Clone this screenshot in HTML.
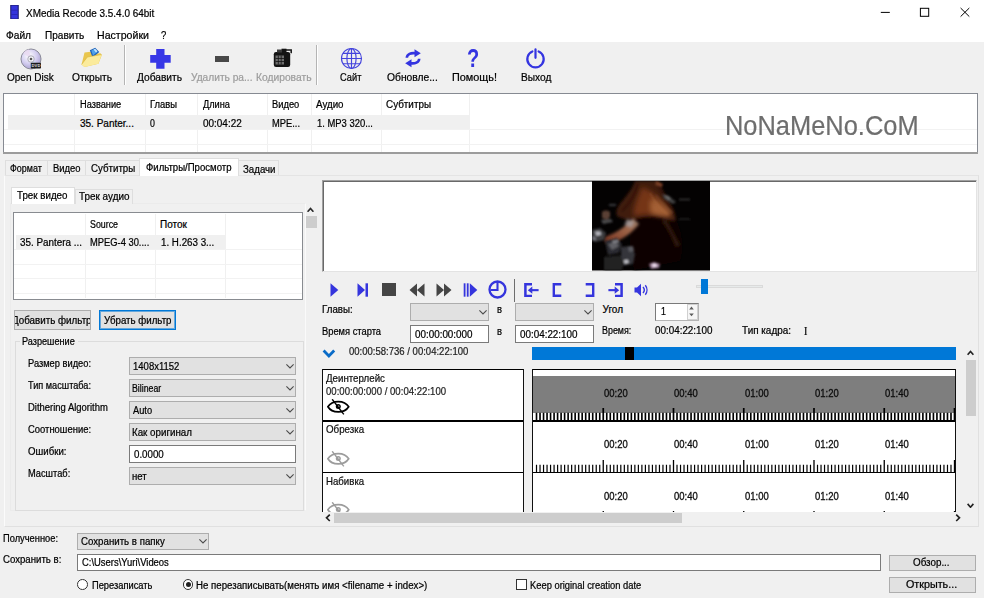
<!DOCTYPE html>
<html><head><meta charset="utf-8">
<style>
*{box-sizing:border-box;margin:0;padding:0}
html,body{width:984px;height:598px;overflow:hidden;background:#f0f0f0}
body{position:relative;font-family:"Liberation Sans",sans-serif;font-size:11px;color:#000}
.a{position:absolute}
.t{position:absolute;white-space:nowrap;color:#000;transform-origin:0 50%;-webkit-text-stroke:0.220px currentColor}
.cb{position:absolute;background:#e1e1e1;border:1px solid #adadad}
.ed{position:absolute;background:#fff;border:1px solid #7a7a7a}
.btn{position:absolute;background:#e1e1e1;border:1px solid #adadad}
.tab{position:absolute;background:#f0f0f0;border:1px solid #dedede;border-bottom:none}
</style></head><body>
<div class="a" style="left:0;top:0;width:984px;height:41.5px;background:#fff"></div>
<svg class="a" style="left:9.500px;top:4.700px" width="9" height="14.200" viewBox="0 0 9 14.200"><rect x="0.200" y="0" width="8.600" height="14.200" fill="#1d1d72"/><rect x="1.300" y="0.600" width="6.400" height="13" fill="#3434dc"/><rect x="1.300" y="4.800" width="6.400" height="0.700" fill="#2424a8"/><rect x="1.300" y="9.300" width="6.400" height="0.700" fill="#2424a8"/></svg>
<svg class="a" style="left:880px;top:7px" width="100" height="12" viewBox="0 0 100 12" fill="none" stroke="#000" stroke-width="1"><path d="M0.800 5.400h9"/><rect x="40.400" y="1.300" width="8.300" height="8"/><path d="M80.600 1l8.700 8.600M89.300 1l-8.700 8.600"/></svg>
<div class="t" style="left:25.50px;top:5.50px;font-size:10.8px;line-height:14px;height:14px;transform:scaleX(0.921);">XMedia Recode 3.5.4.0 64bit</div><div class="t" style="left:6.00px;top:27.60px;font-size:10.8px;line-height:14px;height:14px;transform:scaleX(0.942);">Файл</div><div class="t" style="left:44.50px;top:27.60px;font-size:10.8px;line-height:14px;height:14px;transform:scaleX(0.932);">Править</div><div class="t" style="left:97.00px;top:27.60px;font-size:10.8px;line-height:14px;height:14px;transform:scaleX(0.982);">Настройки</div><div class="t" style="left:161.00px;top:27.60px;font-size:10.8px;line-height:14px;height:14px;transform:scaleX(0.880);">?</div><div class="a" style="left:124px;top:45px;width:1px;height:40px;background:#b4b4b4"></div><div class="a" style="left:125px;top:45px;width:1px;height:40px;background:#fff"></div><div class="a" style="left:316px;top:45px;width:1px;height:40px;background:#b4b4b4"></div><div class="a" style="left:317px;top:45px;width:1px;height:40px;background:#fff"></div><svg class="a" style="left:20px;top:48px" width="22" height="22" viewBox="0 0 22 22">
<defs><radialGradient id="cdg" cx="0.4" cy="0.35" r="0.7"><stop offset="0" stop-color="#ffffff"/><stop offset="0.550" stop-color="#d4cef0"/><stop offset="1" stop-color="#a49ccc"/></radialGradient></defs>
<circle cx="11" cy="11" r="10" fill="url(#cdg)" stroke="#8a8a98" stroke-width="1"/>
<path d="M11 11L3 5A10 10 0 0 1 9 1.200z" fill="#e8d8f0" opacity="0.8"/><path d="M11 11L19 17A10 10 0 0 1 13 20.800z" fill="#c8d8f0" opacity="0.8"/>
<circle cx="11" cy="11" r="3.200" fill="#f4f4f8" stroke="#9a9aa8" stroke-width="0.800"/><circle cx="11" cy="11" r="1.300" fill="#555"/>
<rect x="10.800" y="14.700" width="10.200" height="5.800" rx="0.800" fill="#1c1c1c"/><text x="16" y="19.200" font-family="Liberation Sans" font-size="4.200" font-weight="bold" fill="#ddd" text-anchor="middle">DVD</text>
</svg><svg class="a" style="left:80px;top:46px" width="23" height="23" viewBox="0 0 23 23">
<path d="M4.500 6.500L10.500 5.800L12.300 8L20.500 7.200L21.700 9.200L18.400 17.800L4.500 21L1.600 18.400z" fill="#e9c64e"/>
<path d="M9.800 4.200L15.200 1.800L19.300 5.900L12.600 11.400z" fill="#1f62b8"/><path d="M11.300 4.600L14.900 3L17.600 5.800L13 9.400z" fill="#4da0ea"/><path d="M13.500 3.600l1.700 -0.800l2.300 2.400l-1.500 1.200z" fill="#bfe4ff"/>
<path d="M1.600 18.400L7.400 11L21.700 8.600L18.400 17.800L4.500 21z" fill="#fbeb9c"/><path d="M1.600 18.400L7.400 11L21.700 8.600" fill="none" stroke="#d9b63c" stroke-width="0.600"/>
</svg><svg class="a" style="left:150px;top:48.500px" width="21" height="20" viewBox="0 0 21 20"><path d="M6.200 0h8.300v6h6.200v7.800h-6.200v6h-8.300v-6h-6v-7.800h6z" fill="#3737e6"/></svg><div class="a" style="left:214.5px;top:55.5px;width:14.500px;height:6px;background:#484848"></div><svg class="a" style="left:273px;top:48px" width="20" height="20" viewBox="0 0 20 20">
<rect x="0.800" y="4" width="16.400" height="15" rx="2.200" fill="#141414"/><rect x="8.500" y="0.700" width="5" height="4" fill="#141414"/><path d="M13 2h5.200v3.200" fill="none" stroke="#141414" stroke-width="1.500"/><rect x="4" y="1.500" width="5" height="3" fill="#3a3a3a"/>
<rect x="2.500" y="7.500" width="8.500" height="9" fill="#6e6e6e"/><path d="M2.500 10.500h8.500M2.500 13.500h8.500M5.300 7.500v9M8.200 7.500v9" stroke="#141414" stroke-width="0.800"/>
</svg><svg class="a" style="left:340px;top:47px" width="23" height="23" viewBox="0 0 23 23" fill="none" stroke="#4444dc" stroke-width="1.150">
<circle cx="11.500" cy="11.500" r="10"/><ellipse cx="11.500" cy="11.500" rx="4.600" ry="10"/><path d="M11.500 1.500v20M1.500 11.500h20M3 6.300h17M3 16.700h17"/></svg><svg class="a" style="left:404.500px;top:49px" width="16" height="18.500" viewBox="0 0 16 18.500" fill="none" stroke="#3434e0" stroke-width="2.600">
<path d="M1.800 8.800C2 5 6 3.600 10.500 4.300"/><path d="M14.200 9.700C14 13.500 10 14.900 5.500 14.200"/>
<path d="M9.500 0.300L15.800 4.300L9.500 8.300z" fill="#3434e0" stroke="none"/><path d="M6.500 10.200L0.200 14.200L6.500 18.200z" fill="#3434e0" stroke="none"/></svg><div class="a" style="left:465.400px;top:44.500px;width:16px;height:26px;font-size:25px;line-height:26px;font-weight:bold;color:#3434e0;text-align:center;transform:scaleX(0.800)">?</div><svg class="a" style="left:525.200px;top:48px" width="21" height="21" viewBox="0 0 21 21" fill="none" stroke="#3434e0" stroke-width="2.200" stroke-linecap="round">
<path d="M7.400 3.500A8.200 8.200 0 1 0 13.600 3.500"/><path d="M10.500 1.400v8.400"/></svg><div class="t" style="left:6.50px;top:70.20px;font-size:10.5px;line-height:14px;height:14px;transform:scaleX(0.953);">Open Disk</div><div class="t" style="left:71.75px;top:70.20px;font-size:10.5px;line-height:14px;height:14px;transform:scaleX(0.970);">Открыть</div><div class="t" style="left:136.75px;top:70.20px;font-size:10.5px;line-height:14px;height:14px;transform:scaleX(0.970);">Добавить</div><div class="t" style="left:191.00px;top:70.20px;font-size:10.5px;line-height:14px;height:14px;color:#9d9d9d;transform:scaleX(0.969);">Удалить ра...</div><div class="t" style="left:256.00px;top:70.20px;font-size:10.5px;line-height:14px;height:14px;color:#9d9d9d;transform:scaleX(0.978);">Кодировать</div><div class="t" style="left:340.20px;top:70.20px;font-size:10.5px;line-height:14px;height:14px;transform:scaleX(0.884);">Сайт</div><div class="t" style="left:386.90px;top:70.20px;font-size:10.5px;line-height:14px;height:14px;transform:scaleX(0.979);">Обновле...</div><div class="t" style="left:451.50px;top:70.20px;font-size:10.5px;line-height:14px;height:14px;transform:scaleX(1.033);">Помощь!</div><div class="t" style="left:520.60px;top:70.20px;font-size:10.5px;line-height:14px;height:14px;transform:scaleX(0.967);">Выход</div><div class="a" style="left:3px;top:92.500px;width:975px;height:60.500px;background:#fff;border:1px solid #868a92"></div><div class="a" style="left:3px;top:152px;width:975px;height:1.700px;background:#9c9c9c"></div><div class="a" style="left:7.500px;top:114.600px;width:461.500px;height:14px;background:#f0f0f0"></div><div class="a" style="left:73.5px;top:94px;width:1px;height:58px;background:#f0f0f0"></div><div class="a" style="left:144.5px;top:94px;width:1px;height:58px;background:#f0f0f0"></div><div class="a" style="left:197px;top:94px;width:1px;height:58px;background:#f0f0f0"></div><div class="a" style="left:267px;top:94px;width:1px;height:58px;background:#f0f0f0"></div><div class="a" style="left:311px;top:94px;width:1px;height:58px;background:#f0f0f0"></div><div class="a" style="left:381px;top:94px;width:1px;height:58px;background:#f0f0f0"></div><div class="a" style="left:469px;top:94px;width:1px;height:58px;background:#f0f0f0"></div><div class="a" style="left:4px;top:128.8px;width:973px;height:1px;background:#f2f2f2"></div><div class="a" style="left:4px;top:143.8px;width:973px;height:1px;background:#f2f2f2"></div><div class="t" style="left:79.50px;top:97.70px;font-size:10px;line-height:13px;height:13px;transform:scaleX(0.923);">Название</div><div class="t" style="left:150.00px;top:97.70px;font-size:10px;line-height:13px;height:13px;transform:scaleX(0.939);">Главы</div><div class="t" style="left:202.50px;top:97.70px;font-size:10px;line-height:13px;height:13px;transform:scaleX(0.922);">Длина</div><div class="t" style="left:272.00px;top:97.70px;font-size:10px;line-height:13px;height:13px;transform:scaleX(0.933);">Видео</div><div class="t" style="left:316.25px;top:97.70px;font-size:10px;line-height:13px;height:13px;transform:scaleX(0.975);">Аудио</div><div class="t" style="left:386.25px;top:97.70px;font-size:10px;line-height:13px;height:13px;transform:scaleX(0.988);">Субтитры</div><div class="t" style="left:80.00px;top:116.70px;font-size:10px;line-height:13px;height:13px;">35. Panter...</div><div class="t" style="left:150.00px;top:116.70px;font-size:10px;line-height:13px;height:13px;transform:scaleX(0.880);">0</div><div class="t" style="left:202.50px;top:116.70px;font-size:10px;line-height:13px;height:13px;transform:scaleX(0.995);">00:04:22</div><div class="t" style="left:272.00px;top:116.70px;font-size:10px;line-height:13px;height:13px;transform:scaleX(0.933);">MPE...</div><div class="t" style="left:317.00px;top:116.70px;font-size:10px;line-height:13px;height:13px;transform:scaleX(0.941);">1. MP3 320...</div><div class="t" style="left:724.50px;top:107.70px;font-size:28px;line-height:36px;height:36px;color:#6e6e6e;transform:scaleX(0.908);">NoNaMeNo.CoM</div><div class="a" style="left:3.500px;top:175px;width:975.500px;height:352px;background:#f0f0f0;border:1px solid #e0e0e0;border-left-color:#fbfbfb;border-top-color:#e4e4e4"></div><div class="tab" style="left:4.5px;top:159.5px;width:43.0px;height:15.5px;background:#f0f0f0"></div><div class="tab" style="left:47px;top:159.5px;width:38.5px;height:15.5px;background:#f0f0f0"></div><div class="tab" style="left:85px;top:159.5px;width:54.5px;height:15.5px;background:#f0f0f0"></div><div class="tab" style="left:237.5px;top:159.5px;width:41.5px;height:15.5px;background:#f0f0f0"></div><div class="tab" style="left:139px;top:157.6px;width:99.5px;height:18.900000000000006px;background:#fff"></div><div class="t" style="left:9.50px;top:162.40px;font-size:10px;line-height:13px;height:13px;transform:scaleX(0.894);">Формат</div><div class="t" style="left:52.50px;top:162.40px;font-size:10px;line-height:13px;height:13px;transform:scaleX(0.941);">Видео</div><div class="t" style="left:90.75px;top:162.40px;font-size:10px;line-height:13px;height:13px;transform:scaleX(0.971);">Субтитры</div><div class="t" style="left:145.75px;top:160.50px;font-size:10px;line-height:13px;height:13px;transform:scaleX(0.958);">Фильтры/Просмотр</div><div class="t" style="left:242.50px;top:162.60px;font-size:10px;line-height:13px;height:13px;transform:scaleX(0.968);">Задачи</div><div class="a" style="left:9.500px;top:203px;width:296px;height:308px;border:1px solid #ebebeb;border-right-color:#fafafa;background:#f0f0f0"></div><div class="tab" style="left:74.5px;top:189px;width:58.5px;height:14.5px;background:#f0f0f0"></div><div class="tab" style="left:11px;top:186.5px;width:64px;height:17.5px;background:#fff"></div><div class="t" style="left:17.00px;top:188.50px;font-size:10px;line-height:13px;height:13px;transform:scaleX(0.977);">Трек видео</div><div class="t" style="left:78.75px;top:190.20px;font-size:10px;line-height:13px;height:13px;transform:scaleX(0.991);">Трек аудио</div><div class="a" style="left:13px;top:212px;width:289.500px;height:87.500px;background:#fff;border:1px solid #888b90"></div><div class="a" style="left:15.500px;top:235px;width:209.500px;height:14.200px;background:#f0f0f0"></div><div class="a" style="left:85px;top:213.500px;width:1px;height:84.500px;background:#f0f0f0"></div><div class="a" style="left:155px;top:213.500px;width:1px;height:84.500px;background:#f0f0f0"></div><div class="a" style="left:225px;top:213.500px;width:1px;height:84.500px;background:#f0f0f0"></div><div class="a" style="left:14px;top:249.4px;width:287.500px;height:1px;background:#f2f2f2"></div><div class="a" style="left:14px;top:263.8px;width:287.500px;height:1px;background:#f2f2f2"></div><div class="a" style="left:14px;top:278.2px;width:287.500px;height:1px;background:#f2f2f2"></div><div class="a" style="left:14px;top:292.6px;width:287.500px;height:1px;background:#f2f2f2"></div><div class="t" style="left:90.00px;top:218.10px;font-size:10px;line-height:13px;height:13px;transform:scaleX(0.884);">Source</div><div class="t" style="left:160.00px;top:218.10px;font-size:10px;line-height:13px;height:13px;">Поток</div><div class="t" style="left:20.00px;top:236.20px;font-size:10px;line-height:13px;height:13px;transform:scaleX(0.987);">35. Pantera ...</div><div class="t" style="left:90.00px;top:236.20px;font-size:10px;line-height:13px;height:13px;transform:scaleX(0.935);">MPEG-4 30....</div><div class="t" style="left:161.25px;top:236.20px;font-size:10px;line-height:13px;height:13px;transform:scaleX(0.977);">1. H.263 3...</div><svg class="a" style="left:307.300px;top:206.600px" width="7" height="5.600" viewBox="0 0 7 5.600"><path d="M0.600 4.800L3.500 1.400L6.400 4.800" fill="none" stroke="#2a2a2a" stroke-width="1.600"/></svg><div class="a" style="left:306px;top:215.800px;width:10.500px;height:12.200px;background:#cdcdcd"></div><div class="btn" style="left:13.500px;top:309.500px;width:77px;height:20px"></div><div class="btn" style="left:99px;top:309.500px;width:77px;height:20px;border:1px solid #0078d7;box-shadow:inset 0 0 0 1px rgba(0,120,215,0.550)"></div><div class="a" style="left:14.500px;top:311px;width:75px;height:17px;overflow:hidden"><div class="t" style="left:-3.00px;top:2.60px;font-size:10px;line-height:13px;height:13px;transform:scaleX(0.980);">Добавить фильтр</div></div><div class="t" style="left:103.75px;top:313.60px;font-size:10px;line-height:13px;height:13px;transform:scaleX(0.970);">Убрать фильтр</div><div class="a" style="left:15px;top:341px;width:288.500px;height:170px;border:1px solid #dcdcdc"></div><div class="a" style="left:20px;top:335px;width:58px;height:12px;background:#f0f0f0"></div><div class="t" style="left:22.30px;top:335.20px;font-size:10px;line-height:13px;height:13px;transform:scaleX(0.913);">Разрешение</div><div class="cb" style="left:129px;top:357.2px;width:166.5px;height:17.5px"></div><svg class="a" style="left:285.50px;top:364.05px" width="8.0" height="4.5" viewBox="0 0 8.0 4.5"><path d="M0.400 0.400L4.0 3.9000000000000004L7.6000000000000005 0.400" fill="none" stroke="#4a4a4a" stroke-width="1.05"/></svg><div class="t" style="left:27.80px;top:357.00px;font-size:10px;line-height:13px;height:13px;transform:scaleX(0.929);">Размер видео:</div><div class="t" style="left:133.00px;top:359.90px;font-size:10px;line-height:13px;height:13px;transform:scaleX(0.952);">1408x1152</div><div class="cb" style="left:129px;top:379.2px;width:166.5px;height:17.5px"></div><svg class="a" style="left:285.50px;top:386.05px" width="8.0" height="4.5" viewBox="0 0 8.0 4.5"><path d="M0.400 0.400L4.0 3.9000000000000004L7.6000000000000005 0.400" fill="none" stroke="#4a4a4a" stroke-width="1.05"/></svg><div class="t" style="left:27.80px;top:379.00px;font-size:10px;line-height:13px;height:13px;transform:scaleX(0.916);">Тип масштаба:</div><div class="t" style="left:131.80px;top:381.90px;font-size:10px;line-height:13px;height:13px;transform:scaleX(0.875);">Bilinear</div><div class="cb" style="left:129px;top:401.2px;width:166.5px;height:17.5px"></div><svg class="a" style="left:285.50px;top:408.05px" width="8.0" height="4.5" viewBox="0 0 8.0 4.5"><path d="M0.400 0.400L4.0 3.9000000000000004L7.6000000000000005 0.400" fill="none" stroke="#4a4a4a" stroke-width="1.05"/></svg><div class="t" style="left:27.80px;top:401.00px;font-size:10px;line-height:13px;height:13px;transform:scaleX(0.945);">Dithering Algorithm</div><div class="t" style="left:132.50px;top:403.90px;font-size:10px;line-height:13px;height:13px;transform:scaleX(0.928);">Auto</div><div class="cb" style="left:129px;top:423.2px;width:166.5px;height:17.5px"></div><svg class="a" style="left:285.50px;top:430.05px" width="8.0" height="4.5" viewBox="0 0 8.0 4.5"><path d="M0.400 0.400L4.0 3.9000000000000004L7.6000000000000005 0.400" fill="none" stroke="#4a4a4a" stroke-width="1.05"/></svg><div class="t" style="left:27.80px;top:423.00px;font-size:10px;line-height:13px;height:13px;transform:scaleX(0.943);">Соотношение:</div><div class="t" style="left:131.80px;top:425.90px;font-size:10px;line-height:13px;height:13px;transform:scaleX(0.977);">Как оригинал</div><div class="ed" style="left:129px;top:445.2px;width:166.500px;height:17.500px"></div><div class="t" style="left:27.80px;top:445.00px;font-size:10px;line-height:13px;height:13px;transform:scaleX(0.966);">Ошибки:</div><div class="t" style="left:133.50px;top:447.90px;font-size:10px;line-height:13px;height:13px;transform:scaleX(0.974);">0.0000</div><div class="cb" style="left:129px;top:467.2px;width:166.5px;height:17.5px"></div><svg class="a" style="left:285.50px;top:474.05px" width="8.0" height="4.5" viewBox="0 0 8.0 4.5"><path d="M0.400 0.400L4.0 3.9000000000000004L7.6000000000000005 0.400" fill="none" stroke="#4a4a4a" stroke-width="1.05"/></svg><div class="t" style="left:27.80px;top:467.00px;font-size:10px;line-height:13px;height:13px;transform:scaleX(0.927);">Масштаб:</div><div class="t" style="left:131.80px;top:469.90px;font-size:10px;line-height:13px;height:13px;transform:scaleX(0.958);">нет</div><div class="a" style="left:321.500px;top:179.500px;width:655.500px;height:92px;background:#fff;border:1px solid #a0a0a0;border-right-color:#e3e3e3;border-bottom-color:#e3e3e3"></div><div class="a" style="left:322.500px;top:180.500px;width:653.500px;height:1px;background:#696969"></div><div class="a" style="left:322.500px;top:180.500px;width:1px;height:90px;background:#696969"></div><svg class="a" style="left:592px;top:181px" width="118" height="89.500" viewBox="0 0 118 89.500">
<defs><filter id="b1" x="-20%" y="-20%" width="140%" height="140%"><feGaussianBlur stdDeviation="1.400"/></filter><filter id="b2" x="-20%" y="-20%" width="140%" height="140%"><feGaussianBlur stdDeviation="0.800"/></filter><filter id="b3" x="-30%" y="-30%" width="160%" height="160%"><feGaussianBlur stdDeviation="2.600"/></filter>
<linearGradient id="ag" x1="1" y1="0" x2="0" y2="1"><stop offset="0" stop-color="#988070"/><stop offset="0.400" stop-color="#9c6448"/><stop offset="1" stop-color="#7a3420"/></linearGradient></defs>
<rect width="118" height="89.500" fill="#040202"/>
<g filter="url(#b1)">
<path d="M40 38C50 33 66 34 84 39C90 50 92 66 88 80L42 89C38 70 36 50 40 38z" fill="#0d0504"/>
<path d="M43 0C40 10 31 18 26 26C24 30 24 33 25 35C30 38 38 40 46 37C54 35 62 34 70 36C76 39 82 41 84 38C82 28 76 18 72 12C70 7 68 3 66 0z" fill="#401a0e"/>
<path d="M74 38C78 46 84 56 88 64L84 66C80 56 76 48 70 40z" fill="#2e1408"/>
</g>
<g filter="url(#b3)"><path d="M50 6C60 10 72 20 80 32C80 36 74 37 66 35C58 33 50 34 42 35C40 30 44 20 50 6z" fill="#743418"/><path d="M60 18C68 22 76 28 80 34C76 37 68 35 60 33C58 28 58 22 60 18z" fill="#b06c3c" opacity="0.800"/></g>
<g filter="url(#b2)">
<path d="M46 2C44 12 38 22 30 30M66 4C70 12 76 22 82 34" stroke="#2a0c05" stroke-width="1.600" fill="none" opacity="0.550"/>
<path d="M58 12C62 20 68 27 76 34M64 14C68 20 74 26 80 32" stroke="#c08050" stroke-width="1" fill="none" opacity="0.450"/>
</g>
<g filter="url(#b1)">
<path d="M41 37C36 44 26 51 13 56C11 60 14 63 20 62C30 59 40 52 47 43z" fill="url(#ag)"/>
<path d="M35 38l7 2.500l-2.500 6l-7 -2.500z" fill="#a89c9c" opacity="0.850"/>
</g>
<g filter="url(#b2)">
<path d="M0 49l8 -2l6 5l-2 7l-9 2l-3 -3z" fill="#3c3c40"/><path d="M3 50.500l5 0l1.500 3l-5 1.500z" fill="#b8b8c0"/><path d="M0 55l4 1.500l0 3l-4 0z" fill="#707078"/>
<path d="M10 31c2 -2 6 -2 8 0l0 5l-3 3l-5 -2z" fill="#5a4034"/><path d="M17 23l7 0l0 2l-7 0z" fill="#3a3a3c"/><path d="M9 39l10 -1l2 3l-10 2z" fill="#4a4a4c"/>
<path d="M13 60l12 -3l5 6l-3 9l-11 2z" fill="#2c2c30"/><path d="M16 63l8 -2l3 4l-7 4z" fill="#606066"/><path d="M20 60l6 -1l1 2l-6 1z" fill="#8a8a90"/>
<path d="M29 66l10 -1l4 8l-2 10l-12 2z" fill="#36363a"/><path d="M31.500 79.500l4 -1l1.500 3l-4 1.500z" fill="#c0c0c6"/><path d="M36 66l5 -1l1 5l-5 1z" fill="#5a5a60"/>
<path d="M12 76l16 -2l4 8l-2 7l-18 0z" fill="#202022"/>
<path d="M57 83l5 -2l6 2l-1 4l-8 1z" fill="#9a7e98"/><path d="M59.500 83.500l3.500 -1l2.500 2l-3.500 2z" fill="#f4e4f4"/>
<path d="M70 13l7 2l7 6l-3 2l-9 -5z" fill="#404040"/><path d="M72 14l4 1l3 3l-3 1z" fill="#6a6a6a"/><path d="M87 17.500l11 0l0 2l-11 0z" fill="#2e2e2e"/><path d="M87 37.500l11 0l0 1.500l-11 0z" fill="#262626"/>
<path d="M64 0l7 3l-1.500 3l-6 -2z" fill="#7a4028"/>
</g>
</svg><svg class="a" style="left:330px;top:282.6px" width="9" height="14" viewBox="0 0 9 14"><path d="M0.500 0.300L8.300 7L0.500 13.700z" fill="#3535dd"/></svg><svg class="a" style="left:357px;top:282.6px" width="12" height="14" viewBox="0 0 12 14"><path d="M0.500 0.300L8 7L0.500 13.700z" fill="#3535dd"/><rect x="8.500" y="0.300" width="2.500" height="13.400" fill="#3535dd"/></svg><div class="a" style="left:382px;top:282.600px;width:14px;height:13.500px;background:#454545"></div><svg class="a" style="left:409px;top:282.6px" width="16" height="14" viewBox="0 0 16 14"><path d="M8 0.500L0.500 7L8 13.500zM15.500 0.500L8 7L15.500 13.500z" fill="#454545"/></svg><svg class="a" style="left:436px;top:282.6px" width="16" height="14" viewBox="0 0 16 14"><path d="M0.500 0.500L8 7L0.500 13.500zM8 0.500L15.500 7L8 13.500z" fill="#454545"/></svg><svg class="a" style="left:463px;top:282.6px" width="15" height="14" viewBox="0 0 15 14"><rect x="0.700" y="0.300" width="1.800" height="13.400" fill="#3535dd"/><rect x="3.800" y="0.300" width="1.800" height="13.400" fill="#3535dd"/><path d="M6.800 0.300L14.300 7L6.800 13.700z" fill="#3535dd"/></svg><svg class="a" style="left:488.3px;top:280.2px" width="19" height="19" viewBox="0 0 19 19"><circle cx="9.500" cy="9.500" r="8" fill="none" stroke="#3535dd" stroke-width="2.300"/><path d="M9.500 2v8h-7" fill="none" stroke="#3535dd" stroke-width="2.100"/></svg><div class="a" style="left:513.600px;top:279px;width:1.200px;height:22.500px;background:#6e6e6e"></div><svg class="a" style="left:524.3px;top:282.6px" width="15" height="14.5" viewBox="0 0 15 14.5"><path d="M8 1.300H1.400V13H8" fill="none" stroke="#3535dd" stroke-width="2.500"/><path d="M14.600 7.150H6.500" stroke="#3535dd" stroke-width="2.100" fill="none"/><path d="M8.300 3.600L3.800 7.150L8.300 10.700z" fill="#3535dd"/></svg><svg class="a" style="left:552px;top:282.6px" width="10" height="14" viewBox="0 0 10 14"><path d="M9.300 1.200h-7.500v11.600h7.500" fill="none" stroke="#3535dd" stroke-width="2.400"/></svg><svg class="a" style="left:584.5px;top:282.6px" width="10" height="14" viewBox="0 0 10 14"><path d="M0.700 1.200h7.500v11.600h-7.500" fill="none" stroke="#3535dd" stroke-width="2.400"/></svg><svg class="a" style="left:607.8px;top:282.6px" width="15" height="14.5" viewBox="0 0 15 14.5"><path d="M7 1.300H13.600V13H7" fill="none" stroke="#3535dd" stroke-width="2.500"/><path d="M0.400 7.150H8.500" stroke="#3535dd" stroke-width="2.100" fill="none"/><path d="M6.700 3.600L11.200 7.150L6.700 10.700z" fill="#3535dd"/></svg><svg class="a" style="left:634px;top:282.6px" width="15" height="14" viewBox="0 0 15 14"><path d="M0.500 4.500h2.500l4-3.800v12.600l-4-3.800h-2.500z" fill="#3535dd"/><path d="M9 4a4.500 4.500 0 0 1 0 6M11.300 2.300a7.500 7.500 0 0 1 0 9.400" fill="none" stroke="#3535dd" stroke-width="1.400"/></svg><div class="a" style="left:696px;top:285px;width:67px;height:3px;background:#e7eaea;border:1px solid #dadada"></div><div class="a" style="left:701px;top:278.500px;width:6.500px;height:15.500px;background:#0078d7"></div><div class="t" style="left:321.50px;top:302.80px;font-size:10px;line-height:13px;height:13px;transform:scaleX(0.975);">Главы:</div><div class="cb" style="left:409.5px;top:303.2px;width:79.0px;height:18.19999999999999px"></div><svg class="a" style="left:478.50px;top:310.40px" width="8.0" height="4.5" viewBox="0 0 8.0 4.5"><path d="M0.400 0.400L4.0 3.9000000000000004L7.6000000000000005 0.400" fill="none" stroke="#4a4a4a" stroke-width="1.05"/></svg><div class="cb" style="left:514.5px;top:303.2px;width:79.5px;height:18.19999999999999px"></div><svg class="a" style="left:584.00px;top:310.40px" width="8.0" height="4.5" viewBox="0 0 8.0 4.5"><path d="M0.400 0.400L4.0 3.9000000000000004L7.6000000000000005 0.400" fill="none" stroke="#4a4a4a" stroke-width="1.05"/></svg><div class="t" style="left:497.25px;top:303.20px;font-size:10px;line-height:13px;height:13px;transform:scaleX(0.941);">в</div><div class="t" style="left:602.50px;top:302.80px;font-size:10px;line-height:13px;height:13px;">Угол</div><div class="ed" style="left:654.500px;top:303px;width:44.300px;height:17.600px;border-color:#7a7a7a #b4b4b4 #b4b4b4 #7a7a7a"></div><div class="a" style="left:686.500px;top:304px;width:11.300px;height:15.600px;background:#f6f6f6;border:1px solid #d0d0d0"></div><svg class="a" style="left:689.200px;top:306.300px" width="5" height="11" viewBox="0 0 5 11"><path d="M0.200 3.400L2.500 0.600L4.800 3.400zM0.200 7.400L2.500 10.200L4.800 7.400z" fill="#5c5c5c"/></svg><div class="t" style="left:661.25px;top:305.30px;font-size:10px;line-height:13px;height:13px;transform:scaleX(0.880);">1</div><div class="t" style="left:321.50px;top:324.80px;font-size:10px;line-height:13px;height:13px;transform:scaleX(0.933);">Время старта</div><div class="ed" style="left:409.500px;top:325px;width:79px;height:18px"></div><div class="ed" style="left:514.500px;top:325px;width:79.500px;height:18px"></div><div class="t" style="left:414.75px;top:327.50px;font-size:10px;line-height:13px;height:13px;transform:scaleX(0.985);">00:00:00:000</div><div class="t" style="left:520.00px;top:327.50px;font-size:10px;line-height:13px;height:13px;transform:scaleX(0.985);">00:04:22:100</div><div class="t" style="left:497.25px;top:324.50px;font-size:10px;line-height:13px;height:13px;transform:scaleX(0.941);">в</div><div class="t" style="left:602.00px;top:324.20px;font-size:10px;line-height:13px;height:13px;transform:scaleX(0.890);">Время:</div><div class="t" style="left:655.00px;top:324.20px;font-size:10px;line-height:13px;height:13px;transform:scaleX(0.985);">00:04:22:100</div><div class="t" style="left:742.40px;top:324.20px;font-size:10px;line-height:13px;height:13px;transform:scaleX(0.993);">Тип кадра:</div><div class="t" style="left:804.30px;top:323.50px;font-size:11.5px;line-height:15px;height:15px;transform:scaleX(0.880);font-family:&quot;Liberation Serif&quot;,serif;">I</div><svg class="a" style="left:321.500px;top:348.800px" width="14" height="9.500" viewBox="0 0 14 9.500"><path d="M1.600 1.600L6.900 7L12.200 1.600" fill="none" stroke="#0a6cc8" stroke-width="2.800"/></svg><div class="t" style="left:348.50px;top:344.10px;font-size:10.5px;line-height:14px;height:14px;color:#222;transform:scaleX(0.908);">00:00:58:736 / 00:04:22:100</div><div class="a" style="left:532px;top:347px;width:423.500px;height:13px;background:#0078d7"></div><div class="a" style="left:625px;top:347px;width:8.500px;height:13px;background:#000"></div><div class="a" style="left:318px;top:365px;width:645px;height:146.800px;overflow:hidden"><div class="a" style="left:4.00px;top:4.00px;width:202.00px;height:160.00px;background:#fff;"></div><div class="a" style="left:214.50px;top:4.00px;width:423.50px;height:160.00px;background:#fff;"></div><div class="a" style="left:215.00px;top:11.00px;width:423.00px;height:37.00px;background:#7e7e7e;"></div><div class="a" style="left:214.80px;top:47.80px;width:422.70px;height:7.20px;background:#fff;"></div><svg class="a" style="left:214.80px;top:43.00px" width="423" height="12" viewBox="0 0 423 12"><path d="M3.51 4.800v7.200M7.03 4.800v7.200M10.54 4.800v7.200M14.05 4.800v7.200M17.56 4.800v7.200M21.08 4.800v7.200M24.59 4.800v7.200M28.10 4.800v7.200M31.61 4.800v7.200M35.12 4.800v7.200M38.64 4.800v7.200M42.15 4.800v7.200M45.66 4.800v7.200M49.18 4.800v7.200M52.69 4.800v7.200M56.20 4.800v7.200M59.71 4.800v7.200M63.23 4.800v7.200M66.74 4.800v7.200M73.76 4.800v7.200M77.28 4.800v7.200M80.79 4.800v7.200M84.30 4.800v7.200M87.81 4.800v7.200M91.33 4.800v7.200M94.84 4.800v7.200M98.35 4.800v7.200M101.86 4.800v7.200M105.38 4.800v7.200M108.89 4.800v7.200M112.40 4.800v7.200M115.91 4.800v7.200M119.43 4.800v7.200M122.94 4.800v7.200M126.45 4.800v7.200M129.96 4.800v7.200M133.47 4.800v7.200M136.99 4.800v7.200M144.01 4.800v7.200M147.53 4.800v7.200M151.04 4.800v7.200M154.55 4.800v7.200M158.06 4.800v7.200M161.58 4.800v7.200M165.09 4.800v7.200M168.60 4.800v7.200M172.11 4.800v7.200M175.62 4.800v7.200M179.14 4.800v7.200M182.65 4.800v7.200M186.16 4.800v7.200M189.68 4.800v7.200M193.19 4.800v7.200M196.70 4.800v7.200M200.21 4.800v7.200M203.73 4.800v7.200M207.24 4.800v7.200M214.26 4.800v7.200M217.78 4.800v7.200M221.29 4.800v7.200M224.80 4.800v7.200M228.31 4.800v7.200M231.83 4.800v7.200M235.34 4.800v7.200M238.85 4.800v7.200M242.36 4.800v7.200M245.88 4.800v7.200M249.39 4.800v7.200M252.90 4.800v7.200M256.41 4.800v7.200M259.93 4.800v7.200M263.44 4.800v7.200M266.95 4.800v7.200M270.46 4.800v7.200M273.98 4.800v7.200M277.49 4.800v7.200M284.51 4.800v7.200M288.03 4.800v7.200M291.54 4.800v7.200M295.05 4.800v7.200M298.56 4.800v7.200M302.07 4.800v7.200M305.59 4.800v7.200M309.10 4.800v7.200M312.61 4.800v7.200M316.12 4.800v7.200M319.64 4.800v7.200M323.15 4.800v7.200M326.66 4.800v7.200M330.18 4.800v7.200M333.69 4.800v7.200M337.20 4.800v7.200M340.71 4.800v7.200M344.23 4.800v7.200M347.74 4.800v7.200M354.76 4.800v7.200M358.28 4.800v7.200M361.79 4.800v7.200M365.30 4.800v7.200M368.81 4.800v7.200M372.33 4.800v7.200M375.84 4.800v7.200M379.35 4.800v7.200M382.86 4.800v7.200M386.38 4.800v7.200M389.89 4.800v7.200M393.40 4.800v7.200M396.91 4.800v7.200M400.43 4.800v7.200M403.94 4.800v7.200M407.45 4.800v7.200M410.96 4.800v7.200M414.48 4.800v7.200M417.99 4.800v7.200" stroke="#000" stroke-width="1.65" fill="none"/><path d="M70.25 0v12M140.50 0v12M210.75 0v12M281.00 0v12M351.25 0v12M421.50 0v12" stroke="#000" stroke-width="1.7" fill="none"/></svg><div class="a" style="left:214.80px;top:99.40px;width:422.70px;height:7.20px;background:#fff;"></div><svg class="a" style="left:214.80px;top:94.60px" width="423" height="12" viewBox="0 0 423 12"><path d="M3.51 4.800v7.200M7.03 4.800v7.200M10.54 4.800v7.200M14.05 4.800v7.200M17.56 4.800v7.200M21.08 4.800v7.200M24.59 4.800v7.200M28.10 4.800v7.200M31.61 4.800v7.200M35.12 4.800v7.200M38.64 4.800v7.200M42.15 4.800v7.200M45.66 4.800v7.200M49.18 4.800v7.200M52.69 4.800v7.200M56.20 4.800v7.200M59.71 4.800v7.200M63.23 4.800v7.200M66.74 4.800v7.200M73.76 4.800v7.200M77.28 4.800v7.200M80.79 4.800v7.200M84.30 4.800v7.200M87.81 4.800v7.200M91.33 4.800v7.200M94.84 4.800v7.200M98.35 4.800v7.200M101.86 4.800v7.200M105.38 4.800v7.200M108.89 4.800v7.200M112.40 4.800v7.200M115.91 4.800v7.200M119.43 4.800v7.200M122.94 4.800v7.200M126.45 4.800v7.200M129.96 4.800v7.200M133.47 4.800v7.200M136.99 4.800v7.200M144.01 4.800v7.200M147.53 4.800v7.200M151.04 4.800v7.200M154.55 4.800v7.200M158.06 4.800v7.200M161.58 4.800v7.200M165.09 4.800v7.200M168.60 4.800v7.200M172.11 4.800v7.200M175.62 4.800v7.200M179.14 4.800v7.200M182.65 4.800v7.200M186.16 4.800v7.200M189.68 4.800v7.200M193.19 4.800v7.200M196.70 4.800v7.200M200.21 4.800v7.200M203.73 4.800v7.200M207.24 4.800v7.200M214.26 4.800v7.200M217.78 4.800v7.200M221.29 4.800v7.200M224.80 4.800v7.200M228.31 4.800v7.200M231.83 4.800v7.200M235.34 4.800v7.200M238.85 4.800v7.200M242.36 4.800v7.200M245.88 4.800v7.200M249.39 4.800v7.200M252.90 4.800v7.200M256.41 4.800v7.200M259.93 4.800v7.200M263.44 4.800v7.200M266.95 4.800v7.200M270.46 4.800v7.200M273.98 4.800v7.200M277.49 4.800v7.200M284.51 4.800v7.200M288.03 4.800v7.200M291.54 4.800v7.200M295.05 4.800v7.200M298.56 4.800v7.200M302.07 4.800v7.200M305.59 4.800v7.200M309.10 4.800v7.200M312.61 4.800v7.200M316.12 4.800v7.200M319.64 4.800v7.200M323.15 4.800v7.200M326.66 4.800v7.200M330.18 4.800v7.200M333.69 4.800v7.200M337.20 4.800v7.200M340.71 4.800v7.200M344.23 4.800v7.200M347.74 4.800v7.200M354.76 4.800v7.200M358.28 4.800v7.200M361.79 4.800v7.200M365.30 4.800v7.200M368.81 4.800v7.200M372.33 4.800v7.200M375.84 4.800v7.200M379.35 4.800v7.200M382.86 4.800v7.200M386.38 4.800v7.200M389.89 4.800v7.200M393.40 4.800v7.200M396.91 4.800v7.200M400.43 4.800v7.200M403.94 4.800v7.200M407.45 4.800v7.200M410.96 4.800v7.200M414.48 4.800v7.200M417.99 4.800v7.200" stroke="#000" stroke-width="1.2" fill="none"/><path d="M70.25 0v12M140.50 0v12M210.75 0v12M281.00 0v12M351.25 0v12M421.50 0v12" stroke="#000" stroke-width="1.3" fill="none"/></svg><div class="a" style="left:214.80px;top:151.00px;width:422.70px;height:7.20px;background:#fff;"></div><svg class="a" style="left:214.80px;top:146.20px" width="423" height="12" viewBox="0 0 423 12"><path d="M3.51 4.800v7.200M7.03 4.800v7.200M10.54 4.800v7.200M14.05 4.800v7.200M17.56 4.800v7.200M21.08 4.800v7.200M24.59 4.800v7.200M28.10 4.800v7.200M31.61 4.800v7.200M35.12 4.800v7.200M38.64 4.800v7.200M42.15 4.800v7.200M45.66 4.800v7.200M49.18 4.800v7.200M52.69 4.800v7.200M56.20 4.800v7.200M59.71 4.800v7.200M63.23 4.800v7.200M66.74 4.800v7.200M73.76 4.800v7.200M77.28 4.800v7.200M80.79 4.800v7.200M84.30 4.800v7.200M87.81 4.800v7.200M91.33 4.800v7.200M94.84 4.800v7.200M98.35 4.800v7.200M101.86 4.800v7.200M105.38 4.800v7.200M108.89 4.800v7.200M112.40 4.800v7.200M115.91 4.800v7.200M119.43 4.800v7.200M122.94 4.800v7.200M126.45 4.800v7.200M129.96 4.800v7.200M133.47 4.800v7.200M136.99 4.800v7.200M144.01 4.800v7.200M147.53 4.800v7.200M151.04 4.800v7.200M154.55 4.800v7.200M158.06 4.800v7.200M161.58 4.800v7.200M165.09 4.800v7.200M168.60 4.800v7.200M172.11 4.800v7.200M175.62 4.800v7.200M179.14 4.800v7.200M182.65 4.800v7.200M186.16 4.800v7.200M189.68 4.800v7.200M193.19 4.800v7.200M196.70 4.800v7.200M200.21 4.800v7.200M203.73 4.800v7.200M207.24 4.800v7.200M214.26 4.800v7.200M217.78 4.800v7.200M221.29 4.800v7.200M224.80 4.800v7.200M228.31 4.800v7.200M231.83 4.800v7.200M235.34 4.800v7.200M238.85 4.800v7.200M242.36 4.800v7.200M245.88 4.800v7.200M249.39 4.800v7.200M252.90 4.800v7.200M256.41 4.800v7.200M259.93 4.800v7.200M263.44 4.800v7.200M266.95 4.800v7.200M270.46 4.800v7.200M273.98 4.800v7.200M277.49 4.800v7.200M284.51 4.800v7.200M288.03 4.800v7.200M291.54 4.800v7.200M295.05 4.800v7.200M298.56 4.800v7.200M302.07 4.800v7.200M305.59 4.800v7.200M309.10 4.800v7.200M312.61 4.800v7.200M316.12 4.800v7.200M319.64 4.800v7.200M323.15 4.800v7.200M326.66 4.800v7.200M330.18 4.800v7.200M333.69 4.800v7.200M337.20 4.800v7.200M340.71 4.800v7.200M344.23 4.800v7.200M347.74 4.800v7.200M354.76 4.800v7.200M358.28 4.800v7.200M361.79 4.800v7.200M365.30 4.800v7.200M368.81 4.800v7.200M372.33 4.800v7.200M375.84 4.800v7.200M379.35 4.800v7.200M382.86 4.800v7.200M386.38 4.800v7.200M389.89 4.800v7.200M393.40 4.800v7.200M396.91 4.800v7.200M400.43 4.800v7.200M403.94 4.800v7.200M407.45 4.800v7.200M410.96 4.800v7.200M414.48 4.800v7.200M417.99 4.800v7.200" stroke="#000" stroke-width="1.2" fill="none"/><path d="M70.25 0v12M140.50 0v12M210.75 0v12M281.00 0v12M351.25 0v12M421.50 0v12" stroke="#000" stroke-width="1.3" fill="none"/></svg><div class="a" style="left:4.00px;top:4.00px;width:202.00px;height:1.10px;background:#000;"></div><div class="a" style="left:214.50px;top:4.00px;width:423.50px;height:1.10px;background:#000;"></div><div class="a" style="left:4.00px;top:55.00px;width:202.00px;height:1.55px;background:#000;"></div><div class="a" style="left:214.50px;top:55.00px;width:423.50px;height:1.55px;background:#000;"></div><div class="a" style="left:4.00px;top:106.60px;width:202.00px;height:1.55px;background:#000;"></div><div class="a" style="left:214.50px;top:106.60px;width:423.50px;height:1.55px;background:#000;"></div><div class="a" style="left:4.00px;top:158.20px;width:202.00px;height:1.55px;background:#000;"></div><div class="a" style="left:214.50px;top:158.20px;width:423.50px;height:1.55px;background:#000;"></div><div class="a" style="left:3.90px;top:4.00px;width:1.10px;height:160.00px;background:#111;"></div><div class="a" style="left:204.90px;top:4.00px;width:1.10px;height:160.00px;background:#111;"></div><div class="a" style="left:214.20px;top:4.00px;width:1.10px;height:160.00px;background:#111;"></div><div class="a" style="left:637.10px;top:4.00px;width:1.10px;height:160.00px;background:#111;"></div></div><div class="t" style="left:604.00px;top:385.70px;font-size:10.6px;line-height:14px;height:14px;color:#0c0c0c;transform:scaleX(0.894);-webkit-text-stroke:0.300px #0c0c0c;">00:20</div><div class="t" style="left:674.25px;top:385.70px;font-size:10.6px;line-height:14px;height:14px;color:#0c0c0c;transform:scaleX(0.894);-webkit-text-stroke:0.300px #0c0c0c;">00:40</div><div class="t" style="left:744.50px;top:385.70px;font-size:10.6px;line-height:14px;height:14px;color:#0c0c0c;transform:scaleX(0.894);-webkit-text-stroke:0.300px #0c0c0c;">01:00</div><div class="t" style="left:814.75px;top:385.70px;font-size:10.6px;line-height:14px;height:14px;color:#0c0c0c;transform:scaleX(0.894);-webkit-text-stroke:0.300px #0c0c0c;">01:20</div><div class="t" style="left:885.00px;top:385.70px;font-size:10.6px;line-height:14px;height:14px;color:#0c0c0c;transform:scaleX(0.894);-webkit-text-stroke:0.300px #0c0c0c;">01:40</div><div class="t" style="left:604.00px;top:437.40px;font-size:10.6px;line-height:14px;height:14px;color:#0c0c0c;transform:scaleX(0.894);-webkit-text-stroke:0.300px #0c0c0c;">00:20</div><div class="t" style="left:674.25px;top:437.40px;font-size:10.6px;line-height:14px;height:14px;color:#0c0c0c;transform:scaleX(0.894);-webkit-text-stroke:0.300px #0c0c0c;">00:40</div><div class="t" style="left:744.50px;top:437.40px;font-size:10.6px;line-height:14px;height:14px;color:#0c0c0c;transform:scaleX(0.894);-webkit-text-stroke:0.300px #0c0c0c;">01:00</div><div class="t" style="left:814.75px;top:437.40px;font-size:10.6px;line-height:14px;height:14px;color:#0c0c0c;transform:scaleX(0.894);-webkit-text-stroke:0.300px #0c0c0c;">01:20</div><div class="t" style="left:885.00px;top:437.40px;font-size:10.6px;line-height:14px;height:14px;color:#0c0c0c;transform:scaleX(0.894);-webkit-text-stroke:0.300px #0c0c0c;">01:40</div><div class="t" style="left:604.00px;top:489.10px;font-size:10.6px;line-height:14px;height:14px;color:#0c0c0c;transform:scaleX(0.894);-webkit-text-stroke:0.300px #0c0c0c;">00:20</div><div class="t" style="left:674.25px;top:489.10px;font-size:10.6px;line-height:14px;height:14px;color:#0c0c0c;transform:scaleX(0.894);-webkit-text-stroke:0.300px #0c0c0c;">00:40</div><div class="t" style="left:744.50px;top:489.10px;font-size:10.6px;line-height:14px;height:14px;color:#0c0c0c;transform:scaleX(0.894);-webkit-text-stroke:0.300px #0c0c0c;">01:00</div><div class="t" style="left:814.75px;top:489.10px;font-size:10.6px;line-height:14px;height:14px;color:#0c0c0c;transform:scaleX(0.894);-webkit-text-stroke:0.300px #0c0c0c;">01:20</div><div class="t" style="left:885.00px;top:489.10px;font-size:10.6px;line-height:14px;height:14px;color:#0c0c0c;transform:scaleX(0.894);-webkit-text-stroke:0.300px #0c0c0c;">01:40</div><div class="t" style="left:325.80px;top:370.50px;font-size:10.5px;line-height:14px;height:14px;color:#111;transform:scaleX(0.925);">Деинтерлейс</div><div class="t" style="left:325.90px;top:383.70px;font-size:10.5px;line-height:14px;height:14px;color:#222;transform:scaleX(0.914);">00:00:00:000 / 00:04:22:100</div><div class="t" style="left:325.80px;top:422.30px;font-size:10.5px;line-height:14px;height:14px;color:#111;transform:scaleX(0.929);">Обрезка</div><div class="t" style="left:325.80px;top:474.00px;font-size:10.5px;line-height:14px;height:14px;color:#111;transform:scaleX(0.919);">Набивка</div><svg class="a" style="left:327px;top:399px" width="22.500" height="16" viewBox="0 0 22.500 16"><path d="M0.900 7.700C5 0.800 17.500 0.800 21.700 7.700C17.500 14.500 5 14.500 0.900 7.700z" fill="none" stroke="#000" stroke-width="1.700" stroke-linejoin="miter"/><circle cx="11.300" cy="7.500" r="2.500" fill="#000"/><circle cx="11.700" cy="7.200" r="0.700" fill="#fff"/><path d="M5.200 0.300L16.800 15.400" stroke="#000" stroke-width="1.400"/></svg><svg class="a" style="left:327px;top:450.5px" width="22.500" height="16" viewBox="0 0 22.500 16"><path d="M0.900 7.700C5 0.800 17.500 0.800 21.700 7.700C17.500 14.500 5 14.500 0.900 7.700z" fill="none" stroke="#9c9c9c" stroke-width="1.700" stroke-linejoin="miter"/><circle cx="11.300" cy="7.500" r="2.500" fill="#9c9c9c"/><circle cx="11.700" cy="7.200" r="0.700" fill="#fff"/><path d="M5.200 0.300L16.800 15.400" stroke="#9c9c9c" stroke-width="1.400"/></svg><svg class="a" style="left:327px;top:502.3px" width="22.500" height="9.5" viewBox="0 0 22.500 9.5"><path d="M0.900 7.700C5 0.800 17.500 0.800 21.700 7.700C17.500 14.500 5 14.500 0.900 7.700z" fill="none" stroke="#9c9c9c" stroke-width="1.700" stroke-linejoin="miter"/><circle cx="11.300" cy="7.500" r="2.500" fill="#9c9c9c"/><circle cx="11.700" cy="7.200" r="0.700" fill="#fff"/><path d="M5.200 0.300L16.800 15.400" stroke="#9c9c9c" stroke-width="1.400"/></svg><div class="a" style="left:334px;top:513.200px;width:348px;height:9.700px;background:#cdcdcd"></div><svg class="a" style="left:324.500px;top:514.300px" width="6" height="7.600" viewBox="0 0 6 7.600"><path d="M4.800 0.600L1.500 3.800L4.800 7" fill="none" stroke="#222" stroke-width="1.650"/></svg><svg class="a" style="left:955px;top:514.300px" width="6" height="7.600" viewBox="0 0 6 7.600"><path d="M1.200 0.600L4.500 3.800L1.200 7" fill="none" stroke="#222" stroke-width="1.650"/></svg><div class="a" style="left:965.500px;top:359.800px;width:10.500px;height:55.800px;background:#cdcdcd"></div><svg class="a" style="left:967.200px;top:350.300px" width="7" height="5.600" viewBox="0 0 7 5.600"><path d="M0.600 4.700L3.500 1.400L6.400 4.700" fill="none" stroke="#222" stroke-width="1.650"/></svg><svg class="a" style="left:967.200px;top:502.700px" width="7" height="5.600" viewBox="0 0 7 5.600"><path d="M0.600 0.900L3.500 4.200L6.400 0.900" fill="none" stroke="#222" stroke-width="1.650"/></svg><div class="t" style="left:2.70px;top:532.00px;font-size:10px;line-height:13px;height:13px;transform:scaleX(0.931);">Полученное:</div><div class="cb" style="left:77px;top:532.8px;width:131.5px;height:17.0px"></div><svg class="a" style="left:198.50px;top:539.40px" width="8.0" height="4.5" viewBox="0 0 8.0 4.5"><path d="M0.400 0.400L4.0 3.9000000000000004L7.6000000000000005 0.400" fill="none" stroke="#4a4a4a" stroke-width="1.05"/></svg><div class="t" style="left:80.50px;top:534.90px;font-size:10px;line-height:13px;height:13px;transform:scaleX(0.969);">Сохранить в папку</div><div class="t" style="left:2.70px;top:553.30px;font-size:10px;line-height:13px;height:13px;transform:scaleX(0.963);">Сохранить в:</div><div class="ed" style="left:77px;top:554.300px;width:803.500px;height:17px"></div><div class="t" style="left:81.50px;top:556.30px;font-size:10px;line-height:13px;height:13px;transform:scaleX(0.943);">C:\Users\Yuri\Videos</div><div class="a" style="left:77px;top:579.400px;width:10.800px;height:10.800px;border:1px solid #333;border-radius:50%;background:#fff"></div><div class="a" style="left:182.700px;top:579.400px;width:10.800px;height:10.800px;border:1px solid #333;border-radius:50%;background:#fff"></div><div class="a" style="left:185.500px;top:582.200px;width:5.200px;height:5.200px;border-radius:50%;background:#222"></div><div class="t" style="left:92.20px;top:579.10px;font-size:10px;line-height:13px;height:13px;transform:scaleX(0.930);">Перезаписать</div><div class="t" style="left:196.20px;top:579.10px;font-size:10px;line-height:13px;height:13px;transform:scaleX(0.967);">Не перезаписывать(менять имя &lt;filename + index&gt;)</div><div class="a" style="left:516px;top:579px;width:11px;height:11px;border:1px solid #333;background:#fff"></div><div class="t" style="left:529.70px;top:578.80px;font-size:10px;line-height:13px;height:13px;transform:scaleX(0.935);">Keep original creation date</div><div class="btn" style="left:889px;top:555px;width:86.500px;height:15.500px"></div><div class="btn" style="left:889px;top:577px;width:86.500px;height:15.500px"></div><div class="t" style="left:913.00px;top:556.00px;font-size:10px;line-height:13px;height:13px;transform:scaleX(0.983);">Обзор...</div><div class="t" style="left:905.80px;top:578.00px;font-size:10px;line-height:13px;height:13px;transform:scaleX(1.075);">Открыть...</div>
</body></html>
